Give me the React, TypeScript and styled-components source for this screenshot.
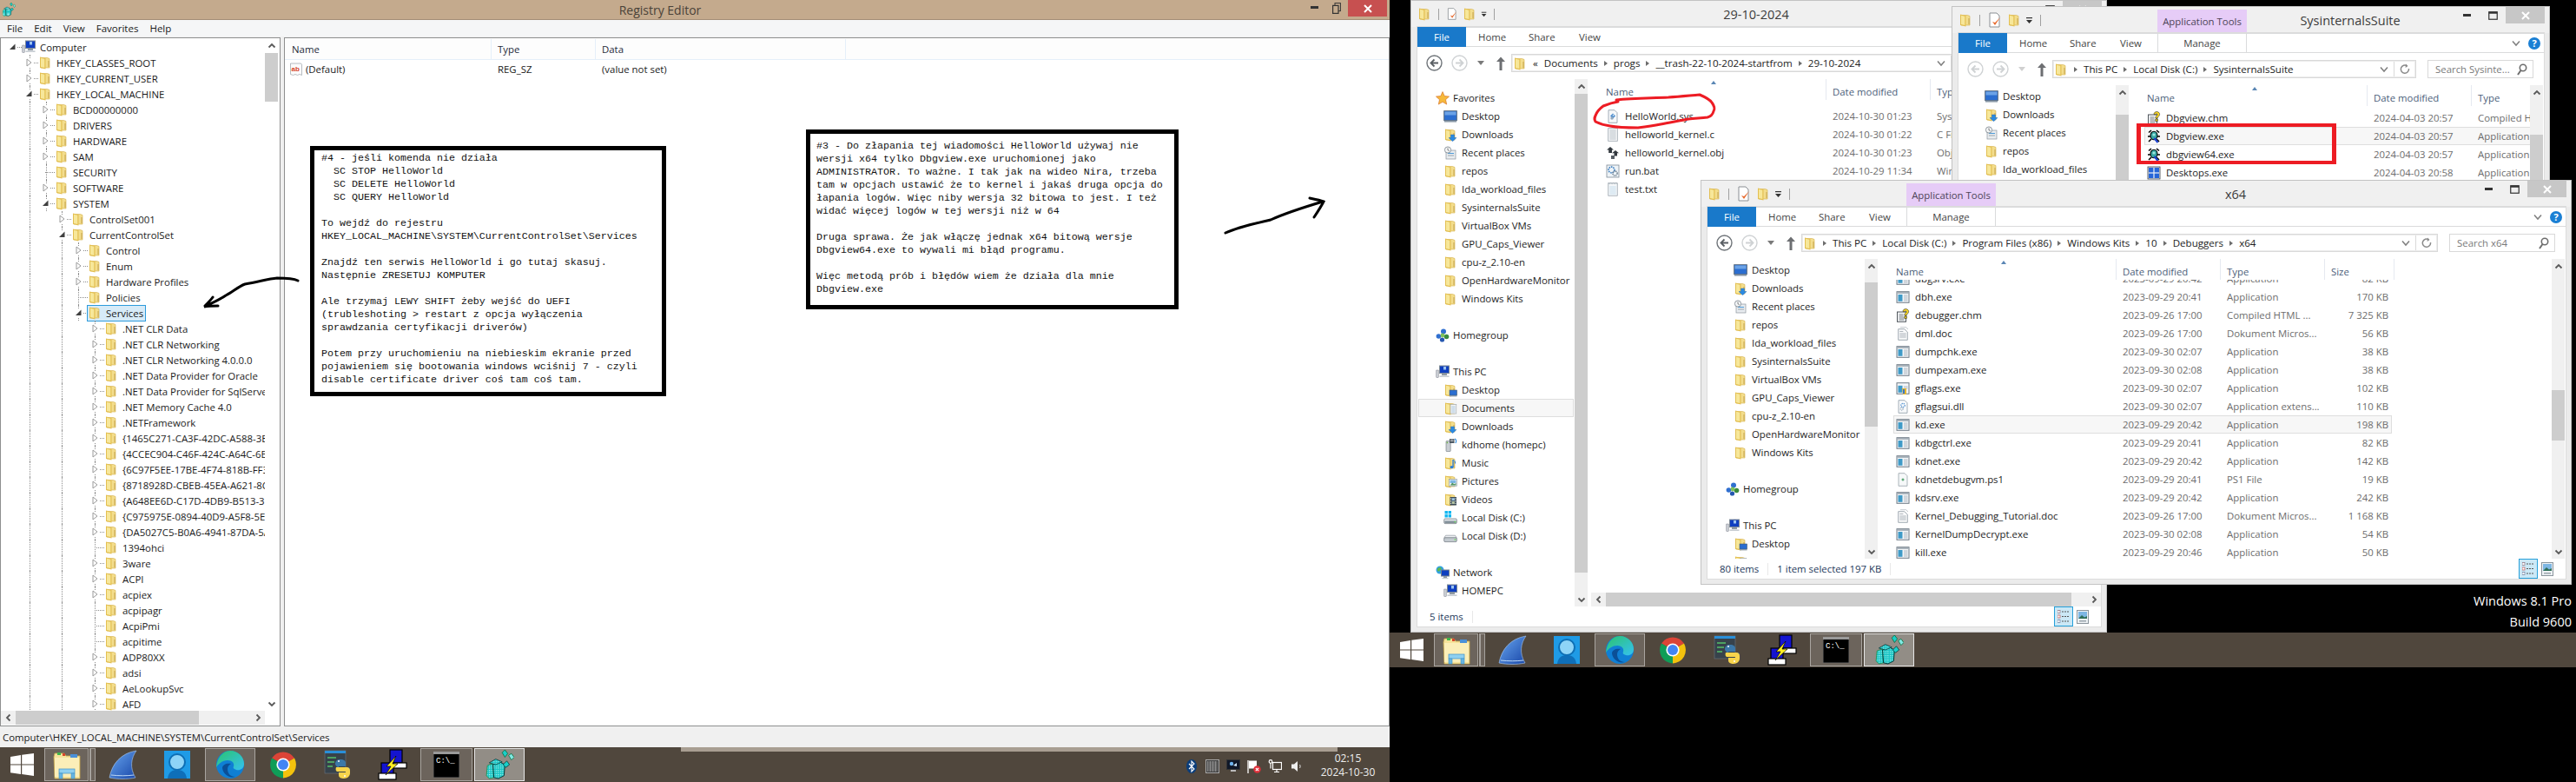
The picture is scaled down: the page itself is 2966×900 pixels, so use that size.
import React from "react";
import styled, { createGlobalStyle } from "styled-components";

const UI = `"Open Sans","Liberation Sans",sans-serif`;

const Global = createGlobalStyle`
  html, body { margin: 0; padding: 0; background: #000; }
  body { width: 2966px; height: 900px; overflow: hidden; font-family: ${UI}; font-size: 11px; }
  * { box-sizing: border-box; }
`;

/* ---------- icons ---------- */
type IconName = string;
const folderBase = (
  <>
    <path d="M3 2.5h7.5l2.5 1v10.5H3z" fill="#f3dd8c" stroke="#d4ae48" strokeWidth=".6" />
    <path d="M2 1.5l6.5 1.6v12.4L2 14z" fill="#e3bf52" />
    <path d="M3 2.8l4.3 1v10.1L3 13z" fill="#f7e79a" />
    <rect x="11.6" y="6" width=".8" height="7" fill="#b8973f" />
  </>
);
const paths: Record<IconName, React.ReactNode> = {
  folder: folderBase,
  desktop: (
    <>
      <rect x=".7" y="1.7" width="14.6" height="11" fill="#2b6ed0" stroke="#5a6a7a" />
      <rect x="1.5" y="2.5" width="13" height="4" fill="#6ba2e6" />
      <rect x="1" y="13" width="14" height="1.6" fill="#8c9aa8" />
    </>
  ),
  downloads: (
    <>
      {folderBase}
      <path d="M8.5 8h4v3.5H15l-4.5 4.2L6 11.5h2.5z" fill="#2b8ae2" stroke="#1a5fa8" strokeWidth=".4" />
    </>
  ),
  recent: (
    <>
      <rect x="3" y="5" width="11" height="10" fill="#e8ecef" stroke="#8d969e" strokeWidth=".7" />
      <rect x="5" y="8" width="7" height="1" fill="#4d9ad8" />
      <rect x="5" y="10.5" width="7" height="1" fill="#9aa4ac" />
      <circle cx="5" cy="4.5" r="3.6" fill="#f4f6f7" stroke="#79838c" strokeWidth=".8" />
      <path d="M5 2.5v2.2l1.6 1" fill="none" stroke="#444" strokeWidth=".7" />
    </>
  ),
  star: <path d="M8 .6l2.2 5 5.3.5-4 3.6 1.2 5.4L8 12.3l-4.7 2.8 1.2-5.4-4-3.6 5.3-.5z" fill="#f6b93b" stroke="#d9742a" strokeWidth=".7" />,
  homegroup: (
    <>
      <circle cx="9" cy="3.5" r="3" fill="#2f6fd0" />
      <circle cx="3.4" cy="9" r="2.8" fill="#2f6fd0" />
      <circle cx="12.5" cy="9.5" r="2.8" fill="#3c8b3e" />
      <circle cx="7.5" cy="13" r="2.6" fill="#2557b0" />
      <circle cx="8" cy="8" r="2.4" fill="#7fc25a" />
    </>
  ),
  pc: (
    <>
      <rect x=".8" y="6" width="2.4" height="8.5" fill="#c8cdd2" stroke="#667" strokeWidth=".4" />
      <rect x="4.5" y="1" width="11" height="8.6" fill="#0f3fc0" stroke="#7e8a96" />
      <rect x="9" y="2" width="3" height="3.5" fill="#9cc4f0" />
      <rect x="7" y="10" width="6" height="2" fill="#8f99a3" />
      <rect x="4.5" y="12.4" width="11" height="1.6" fill="#c5cbd1" />
    </>
  ),
  dfolder: (
    <>
      {folderBase}
      <rect x="7" y="8" width="8.5" height="6" fill="#2b6ed0" stroke="#4a5a6a" strokeWidth=".6" />
      <rect x="7" y="14" width="8.5" height="1.4" fill="#8c9aa8" />
    </>
  ),
  documents: (
    <>
      {folderBase}
      <rect x="8" y="3.5" width="6.8" height="10.5" fill="#f3f5f6" stroke="#98a2aa" strokeWidth=".6" />
      <path d="M9.3 6h4.2M9.3 8h4.2M9.3 10h4.2M9.3 12h4.2" stroke="#8db2d4" strokeWidth=".7" />
    </>
  ),
  music: (
    <>
      {folderBase}
      <path d="M11 4v8.5" stroke="#2b7ed8" strokeWidth="1.3" />
      <path d="M11 4c1.5 1 3 2 2.6 4.5" fill="none" stroke="#2b7ed8" strokeWidth="1" />
      <ellipse cx="9.5" cy="12.6" rx="2" ry="1.6" fill="#2b7ed8" />
    </>
  ),
  pictures: (
    <>
      {folderBase}
      <rect x="6.5" y="5.5" width="9" height="8" fill="#eef2f5" stroke="#8a949c" strokeWidth=".6" />
      <rect x="7.6" y="6.6" width="6.8" height="3.4" fill="#7db6e3" />
      <path d="M7.6 12.5l2.7-3 2 1.7 2.1-1.2v2.5z" fill="#4e9460" />
    </>
  ),
  videos: (
    <>
      {folderBase}
      <rect x="7.5" y="5" width="7.5" height="9.5" fill="#3b4a55" />
      <path d="M8.6 6v7.6M13.9 6v7.6" stroke="#e8eef2" strokeWidth="1" strokeDasharray="1 1" />
      <rect x="9.7" y="6.2" width="3.1" height="3" fill="#9ec5e2" />
      <rect x="9.7" y="10" width="3.1" height="3" fill="#b6c6a5" />
    </>
  ),
  netdrive: (
    <>
      <rect x="3" y="3.5" width="5.2" height="12" rx=".6" fill="#c9ced3" stroke="#6d767e" strokeWidth=".6" />
      <rect x="7" y="1" width="5.5" height="5" fill="#4c5863" />
      <path d="M8 2h3.5M8 3.5h3.5" stroke="#ddd" strokeWidth=".7" />
      <path d="M13 1c1.8 1 2.2 3 .8 5" fill="none" stroke="#2d8be0" strokeWidth="1.1" />
      <rect x="3.6" y="4.6" width="1.6" height="1.6" fill="#6fb24c" />
    </>
  ),
  diskc: (
    <>
      <rect x=".7" y="9" width="14.6" height="5.6" rx="1.2" fill="#dfe3e6" stroke="#6a737b" strokeWidth=".7" />
      <rect x="1.4" y="11.5" width="13.2" height="2.5" fill="#84919b" />
      <rect x="12.6" y="11.9" width="1.6" height="1.4" fill="#6ddc5a" />
      <rect x="1.5" y="0" width="3.4" height="3.4" fill="#11b6f0" />
      <rect x="5.6" y="0" width="3.4" height="3.4" fill="#11b6f0" />
      <rect x="1.5" y="4.1" width="3.4" height="3.4" fill="#11b6f0" />
      <rect x="5.6" y="4.1" width="3.4" height="3.4" fill="#11b6f0" />
    </>
  ),
  diskd: (
    <>
      <path d="M2.5 7.2h11l1.8 3H.7z" fill="#eef1f3" stroke="#7c858d" strokeWidth=".6" />
      <rect x=".7" y="9.8" width="14.6" height="4.8" rx="1.2" fill="#c3cad0" stroke="#6a737b" strokeWidth=".7" />
      <rect x="12.6" y="11.4" width="1.6" height="1.4" fill="#6ddc5a" />
    </>
  ),
  network: (
    <>
      <circle cx="5" cy="5" r="4.5" fill="#31a0e0" />
      <path d="M2 3.5c2-2 3-.8 4-1.8 1 1.5.4 3-1 3.6-.4 1.6-2 1.6-3 .6z" fill="#5fb94b" />
      <rect x="6.5" y="5" width="9" height="7" fill="#0f3fc0" stroke="#73808c" />
      <rect x="9" y="12" width="4" height="2.2" fill="#8f99a3" />
      <rect x="7.5" y="14" width="7" height="1.2" fill="#c5cbd1" />
    </>
  ),
  sys: (
    <>
      <path d="M3 .7h7l3 3v11.6H3z" fill="#f6f8fa" stroke="#8d9aa6" strokeWidth=".8" />
      <path d="M8 4.5l3 3-3 3-3-3z" fill="#4f8fcf" />
      <circle cx="7" cy="10" r="1.7" fill="#93a9bf" />
      <circle cx="8.5" cy="6.7" r=".8" fill="#fff" />
    </>
  ),
  cfile: (
    <>
      <rect x="2.7" y=".7" width="10.6" height="14.6" fill="#f8f9fa" stroke="#9aa4ad" strokeWidth=".8" />
      <path d="M4.3 3h7.4M4.3 5h7.4M4.3 7h7.4M4.3 9h7.4M4.3 11h7.4M4.3 13h7.4" stroke="#9fa9b2" strokeWidth=".7" />
    </>
  ),
  obj: (
    <>
      <path d="M5 1l4 3.4H7V8H3.2V4.4H1z" fill="#33393f" />
      <path d="M11 5l4 3.2h-2v3.4H9.5V8.2H7z" fill="#33393f" />
      <path d="M6 11h4v4H6z" fill="#555c63" />
    </>
  ),
  bat: (
    <>
      <rect x="1" y="1" width="14" height="14" fill="#eef3f7" stroke="#7f8c98" strokeWidth=".8" />
      <circle cx="6.5" cy="6.5" r="3.4" fill="none" stroke="#3e7fc0" strokeWidth="1.6" strokeDasharray="1.6 .9" />
      <circle cx="10.5" cy="10.5" r="2.6" fill="none" stroke="#6c7d8d" strokeWidth="1.4" strokeDasharray="1.3 .8" />
    </>
  ),
  txt: (
    <>
      <path d="M2.7.7h10.6v14.6H2.7z" fill="#f5f7f9" stroke="#9aa4ad" strokeWidth=".8" />
      <path d="M2.7.7l1.5 1 1.5-1 1.5 1 1.5-1 1.5 1 1.5-1 1.5 1" fill="none" stroke="#9aa4ad" strokeWidth=".6" />
      <path d="M4.3 5h7.4M4.3 7h7.4M4.3 9h7.4M4.3 11h7.4M4.3 13h7.4" stroke="#b5d2e8" strokeWidth=".7" />
    </>
  ),
  exe: (
    <>
      <rect x="1" y="1.7" width="14" height="12.6" fill="#f4f6f8" stroke="#6e7a85" />
      <rect x="1.5" y="2.2" width="13" height="1.6" fill="#99a5af" />
      <rect x="2.5" y="5" width="5" height="7.8" fill="#3f9ac7" />
      <path d="M9 6h4.5M9 8h4.5M9 10h4.5M9 12h4.5" stroke="#9da8b2" strokeWidth=".8" />
    </>
  ),
  gflags: (
    <>
      <rect x="1" y="1.7" width="14" height="12.6" fill="#f4f6f8" stroke="#6e7a85" />
      <rect x="2.5" y="4.8" width="5" height="8" fill="#3f9ac7" />
      <path d="M9 6h4.5M9 8h4.5" stroke="#9da8b2" strokeWidth=".8" />
      <path d="M7 8h5v7H8z" fill="#e4b72f" />
      <rect x="8" y="9" width="2" height="5" fill="#4077c2" />
    </>
  ),
  chm: (
    <>
      <rect x="1.5" y="4" width="10" height="11.3" fill="#f3f5f7" stroke="#40474d" strokeWidth=".9" />
      <path d="M3.5 7h5M3.5 9h5M3.5 11h6M3.5 13h6" stroke="#5b6269" strokeWidth=".8" />
      <path d="M8 3.5C8 1.4 9.8.6 11.2.6c1.9 0 3.4 1.2 3.4 3 0 2.2-2.4 2.6-2.4 4.4h-2.4c0-2.6 2.2-3 2.2-4.2 0-.6-.4-1-1-1-.7 0-1 .5-1 1.1zM9.8 9h2.6v2.4H9.8z" fill="#ffdc24" stroke="#222" strokeWidth=".6" />
    </>
  ),
  word: (
    <>
      <path d="M2.7 2.7h7l3.6 3.4v9.2H2.7z" fill="#f8f9fa" stroke="#8c969f" strokeWidth=".8" />
      <path d="M4.3 8h7.4M4.3 10h7.4M4.3 12h7.4M4.3 5.5h4" stroke="#9099a2" strokeWidth=".7" />
      <path d="M5 .7h6.6l2.4 2.3" fill="none" stroke="#aab2ba" strokeWidth=".7" />
    </>
  ),
  dll: (
    <>
      <path d="M3 .7h7l3 3v11.6H3z" fill="#f7f9fb" stroke="#8d9aa6" strokeWidth=".8" />
      <circle cx="8" cy="6.5" r="2.2" fill="none" stroke="#4f8fcf" strokeWidth="1.3" strokeDasharray="1.2 .8" />
      <circle cx="6.6" cy="10.6" r="1.6" fill="none" stroke="#7d92a6" strokeWidth="1" strokeDasharray="1 .7" />
    </>
  ),
  ps1: (
    <>
      <path d="M3 .7h7l3 3v11.6H3z" fill="#f6f8f9" stroke="#98a2aa" strokeWidth=".8" />
      <path d="M8 6.5v3M6.5 8h3" stroke="#2e8f4f" strokeWidth="1" />
    </>
  ),
  bug: (
    <>
      <path d="M5 1L2 3.5M11 1l3 2.5M1 8h3M15 8h-3M2 14l3-3M14 14l-3-3" stroke="#000" strokeWidth="1.5" />
      <ellipse cx="8" cy="7" rx="4" ry="4.8" fill="#36a6a2" stroke="#000" strokeWidth="1.1" />
      <circle cx="8" cy="6" r="1.6" fill="#9fe6e0" />
      <path d="M8.5 10l4 5" stroke="#1a3fd0" strokeWidth="2.2" />
    </>
  ),
  tiles: (
    <>
      <rect x="1" y="1" width="14" height="14" fill="#eef2f7" stroke="#333a42" strokeWidth=".8" />
      <rect x="2" y="2" width="5.4" height="5.4" fill="#2766d8" />
      <rect x="8.6" y="2" width="5.4" height="5.4" fill="#2766d8" />
      <rect x="2" y="8.6" width="5.4" height="5.4" fill="#2766d8" />
      <rect x="8.6" y="8.6" width="5.4" height="5.4" fill="#2766d8" />
    </>
  ),
  regval: (
    <>
      <path d="M1.5 1h12l1 1.2v12.3l-2.6-1-2.4 1-2.5-1-2.5 1-3-1z" fill="#fbfbfb" stroke="#9aa1a8" strokeWidth=".7" />
      <text x="2.6" y="9.5" fontSize="8" fontWeight="700" fill="#d8452a" fontFamily="Liberation Sans, sans-serif">ab</text>
    </>
  ),
};
const Glyph: React.FC<{ name: IconName; size?: number }> = ({ name, size = 16 }) => (
  <svg width={size} height={size} viewBox="0 0 16 16" style={{ flex: "none" }}>
    {paths[name]}
  </svg>
);

const RegeditIcon: React.FC<{ size: number }> = ({ size }) => (
  <svg width={size} height={size} viewBox="0 0 32 32" style={{ flex: "none" }}>
    <defs>
      <pattern id="regGrid" width="2.4" height="2.4" patternUnits="userSpaceOnUse">
        <rect width="2.4" height="2.4" fill="#18c4c4" />
        <rect width="1.1" height="1.1" fill="#b9f6f2" />
      </pattern>
    </defs>
    <path d="M2 28l1-11 6-2 1 15-5 1z" fill="url(#regGrid)" stroke="#083" strokeWidth=".6" />
    <path d="M10 30l-1-14 7-3 6 3-1 12-6 3z" fill="url(#regGrid)" stroke="#033" strokeWidth=".9" />
    <path d="M5 14l7-4 7 3-7 3z" fill="url(#regGrid)" stroke="#033" strokeWidth=".7" />
    <path d="M20 16l4-4 3 4-4 3z" fill="#19cfc9" stroke="#033" strokeWidth=".7" />
    <path d="M19 3l3-3 3 4-3 4z" fill="#19cfc9" stroke="#063" strokeWidth=".7" />
    <path d="M26 6l3-2 3 4-3 3z" fill="#7fe8e2" stroke="#063" strokeWidth=".7" />
  </svg>
);

const tbIcons: Record<string, React.ReactNode> = {
  explorer: (
    <svg width="34" height="34" viewBox="0 0 34 34">
      <path d="M2 8l1-4h11l2 3h16v26H3z" fill="#f6e39a" stroke="#c5a64f" strokeWidth=".8" />
      <rect x="3" y="9" width="28" height="22" fill="#fbeeb8" />
      <rect x="6" y="3" width="4" height="3" fill="#3fb54b" />
      <rect x="12" y="4" width="3" height="3" fill="#d8452a" />
      <rect x="21" y="5" width="8" height="4" fill="#4a90d8" />
      <rect x="8" y="22" width="18" height="5" fill="#8fd0f0" stroke="#3e90c8" strokeWidth=".7" />
      <path d="M8 27h4v6H8zM22 27h4v6h-4z" fill="#66b5e3" stroke="#3e90c8" strokeWidth=".6" />
    </svg>
  ),
  shark: (
    <svg width="34" height="34" viewBox="0 0 34 34">
      <defs>
        <linearGradient id="sharkG" x1="0" y1="0" x2="1" y2="1">
          <stop offset="0" stopColor="#6aa8f0" />
          <stop offset="1" stopColor="#1846a8" />
        </linearGradient>
      </defs>
      <path d="M1 32C4 16 14 4 32 1c-6 8-8 20-1 31-10 2-20 2-30 0z" fill="url(#sharkG)" stroke="#a9c9ee" strokeWidth=".6" />
      <path d="M3 29c9 1 18 1 26 0" fill="none" stroke="#bcd7f5" strokeWidth="1" />
    </svg>
  ),
  search: (
    <svg width="30" height="32" viewBox="0 0 30 32">
      <rect width="30" height="32" fill="#1f9be6" />
      <circle cx="15" cy="13" r="9" fill="#8ed4f7" stroke="#0e6fb5" strokeWidth="2" />
      <path d="M4 32c1-8 6-10 11-10s10 2 11 10z" fill="#0f6fb9" />
    </svg>
  ),
  edge: (
    <svg width="34" height="34" viewBox="0 0 34 34">
      <defs>
        <linearGradient id="edgeG" x1="0" y1="0" x2="1" y2="1">
          <stop offset="0" stopColor="#2bc46c" />
          <stop offset="1" stopColor="#35c1f1" />
        </linearGradient>
      </defs>
      <circle cx="17" cy="17" r="16" fill="#0f7fd4" />
      <path d="M17 1c9 0 16 7 16 15 0 6-5 8-9 7-3-1-4-2-3-4 1-3-1-7-7-7-5 0-10 3-13 8C2 10 8 1 17 1z" fill="url(#edgeG)" />
      <path d="M8 21c1 7 8 12 15 10-6 0-9-4-9-9 0-3 2-5 4-6-5-1-10 1-10 5z" fill="#0b4f96" />
    </svg>
  ),
  chrome: (
    <svg width="34" height="34" viewBox="0 0 34 34">
      <path d="M17 17L4 9.5A15.5 15.5 0 0 1 30 9.5z" fill="#db4437" />
      <path d="M17 17L30 9.5A15.5 15.5 0 0 1 17 32.5z" fill="#f4c20d" />
      <path d="M17 17L17 32.5A15.5 15.5 0 0 1 4 9.5z" fill="#0f9d58" />
      <circle cx="17" cy="17" r="7.6" fill="#fff" />
      <circle cx="17" cy="17" r="6" fill="#4285f4" />
    </svg>
  ),
  python: (
    <svg width="32" height="34" viewBox="0 0 32 34">
      <rect x="1" y="1" width="24" height="26" fill="#37424b" stroke="#6b7680" strokeWidth=".6" />
      <rect x="1" y="1" width="24" height="3" fill="#2a8fd8" />
      <path d="M4 9h10M4 14h8M4 19h6" stroke="#55c16a" strokeWidth="1.4" />
      <path d="M13 16c0-3 2-5 6-5s6 2 6 4v4h-8v1h10c2 0 3 1 3 4h-8c-3 0-6 0-6-3 0-2-3-2-3-5z" fill="#3c78a8" />
      <path d="M17 20h9c3 0 4 2 4 4v3c0 3-3 6-7 6-3 0-6-1-6-4v-3h8v-1h-9c-2 0-3-2-2-5z" fill="#f7d44c" />
      <circle cx="17" cy="13" r="1" fill="#fff" />
      <circle cx="24" cy="30" r="1" fill="#fff" />
    </svg>
  ),
  putty: (
    <svg width="34" height="36" viewBox="0 0 34 36">
      <rect x="14" y="1" width="14" height="15" fill="#1414d0" stroke="#000" strokeWidth="1.2" />
      <rect x="13" y="16" width="20" height="6" fill="#fff" stroke="#000" strokeWidth="1.2" />
      <rect x="4" y="16" width="14" height="14" fill="#1414d0" stroke="#000" strokeWidth="1.2" />
      <rect x="1" y="28" width="20" height="7" fill="#fff" stroke="#000" strokeWidth="1.2" />
      <path d="M21 8L10 20h5l-6 10 14-13h-6z" fill="#ffee22" stroke="#000" strokeWidth=".7" />
    </svg>
  ),
  cmd: (
    <svg width="30" height="30" viewBox="0 0 30 30">
      <rect width="30" height="30" fill="#000" stroke="#666" />
      <rect width="30" height="3" fill="#9a9a9a" />
      <text x="3" y="13" fontSize="9" fill="#fff" fontFamily="Liberation Mono, monospace">C:\_</text>
    </svg>
  ),
};

const Win8Logo = () => (
  <svg width="27" height="26" viewBox="0 0 27 26">
    <path d="M0 4l12-2v10.5H0zM13.2 1.8L27 0v12.5H13.2zM0 13.6h12V24L0 22.2zM13.2 13.6H27V26l-13.8-2z" fill="#fff" />
  </svg>
);

/* ---------- page ---------- */
const Page = styled.div`
  display: flex;
  width: 2966px;
  height: 900px;
  background: #000;
  overflow: hidden;
  color: #1a1a1a;
`;
const LeftMonitor = styled.div`
  position: relative;
  display: flex;
  flex-direction: column;
  width: 1600px;
  height: 900px;
`;
const RightMonitor = styled.div`
  display: flex;
  flex-direction: column;
  width: 1366px;
  height: 900px;
`;
const Desktop = styled.div`
  position: relative;
  height: 728px;
  flex: none;
  background: #000;
  overflow: hidden;
`;

/* ---------- registry editor ---------- */
const RegWindow = styled.div`
  flex: 1;
  display: flex;
  flex-direction: column;
  background: #f0f0f0;
  min-height: 0;
`;
const RegTitleBar = styled.div`
  height: 23px;
  flex: none;
  display: flex;
  align-items: center;
  background: #c4aa8d;
  border-bottom: 1px solid #a38d76;
  padding-left: 2px;
`;
const RegTitle = styled.div`
  flex: 1;
  text-align: center;
  font-size: 14px;
  color: #4a4239;
  padding-left: 2px;
  padding-top: 1px;
`;
const RegControls = styled.div`
  display: flex;
  align-self: flex-start;
  margin-right: 3px;
  height: 19px;
`;
const RegControl = styled.div`
  width: 26px;
  height: 18px;
  display: flex;
  align-items: center;
  justify-content: center;
`;
const RegClose = styled.div`
  width: 45px;
  height: 19px;
  background: #c75050;
  color: #fff;
  display: flex;
  align-items: center;
  justify-content: center;
`;
const MenuBar = styled.div`
  height: 19px;
  flex: none;
  background: #f5f6f7;
  display: flex;
  align-items: center;
  padding: 0 0 0 8px;
  gap: 13px;
  font-size: 11.5px;
`;
const MenuItem = styled.span`
  color: #1a1a1a;
`;
const Panes = styled.div`
  flex: 1;
  display: flex;
  gap: 4px;
  min-height: 0;
  padding-top: 1px;
`;
const TreePane = styled.div`
  width: 323px;
  flex: none;
  display: flex;
  flex-direction: column;
  background: #fff;
  border: 1px solid #8e8f8f;
  border-bottom: 1px solid #8e8f8f;
  min-height: 0;
`;
const TreeBody = styled.div`
  flex: 1;
  display: flex;
  min-height: 0;
`;
const TreeList = styled.div`
  flex: 1;
  min-width: 0;
  overflow: hidden;
  padding-top: 1px;
`;
const TreeRowBox = styled.div<{ $level: number }>`
  position: relative;
  display: flex;
  align-items: center;
  height: 18px;
  padding-left: ${(p) => 8 + p.$level * 19}px;
  white-space: nowrap;
  font-size: 11.4px;
`;
const TreeGuide = styled.span<{ $x: number }>`
  position: absolute;
  top: 0;
  bottom: 0;
  left: ${(p) => p.$x}px;
  border-left: 1px dotted #8d8d8d;
`;
const Expander = styled.span`
  position: relative;
  width: 11px;
  height: 11px;
  flex: none;
  background: #fff;
  display: flex;
  align-items: center;
  justify-content: center;
`;
const ExpanderTail = styled.span`
  width: 5px;
  flex: none;
  border-bottom: 1px dotted #8d8d8d;
`;
const LeafTail = styled.span`
  width: 11px;
  flex: none;
  margin-left: 5px;
  border-bottom: 1px dotted #8d8d8d;
`;
const TreeLabel = styled.span<{ $sel?: boolean }>`
  display: inline-flex;
  align-items: center;
  gap: 5px;
  height: 19px;
  padding: 0 3px 0 1px;
  margin-left: -1px;
  position: relative;
  background: ${(p) => (p.$sel ? "#d7ebf8" : "transparent")};
  outline: ${(p) => (p.$sel ? "1px solid #2d9bdc" : "none")};
  outline-offset: -1px;
`;
const VBar = styled.div<{ $track?: string }>`
  width: 15px;
  flex: none;
  display: flex;
  flex-direction: column;
  background: ${(p) => p.$track || "#f0f0f0"};
`;
const ArrowCell = styled.div`
  height: 17px;
  flex: none;
  display: flex;
  align-items: center;
  justify-content: center;
  color: #444;
`;
const VTrack = styled.div`
  flex: 1;
  min-height: 0;
`;
const VThumb = styled.div<{ $top: number; $h: number }>`
  margin-top: ${(p) => p.$top}px;
  height: ${(p) => p.$h}px;
  background: #cdcdcd;
`;
const HBar = styled.div`
  height: 16px;
  flex: none;
  display: flex;
  background: #f0f0f0;
`;
const HArrow = styled.div`
  width: 17px;
  flex: none;
  display: flex;
  align-items: center;
  justify-content: center;
`;
const HTrack = styled.div`
  flex: 1;
  min-width: 0;
`;
const HThumb = styled.div<{ $w: number }>`
  width: ${(p) => p.$w}px;
  height: 16px;
  background: #cdcdcd;
`;
const TreeHBarWrap = styled.div`
  padding-right: 17px;
  padding-bottom: 1px;
  background: #fff;
`;
const ScrollPad = styled.div`
  width: 2px;
  flex: none;
  background: #fff;
`;
const ValuesPane = styled.div`
  flex: 1;
  min-width: 0;
  background: #fff;
  border: 1px solid #8e8f8f;
`;
const ValuesHeader = styled.div`
  display: grid;
  grid-template-columns: 238px 120px 288px 1fr;
  height: 24px;
  border-bottom: 1px solid #e5effa;
  margin-top: 1px;
  background: #fdfdfd;
  font-size: 11.4px;
  color: #1e2a3a;
`;
const ValuesHead = styled.div`
  display: flex;
  align-items: center;
  padding-left: 7px;
  border-right: 1px solid #e5effa;
  &:first-child {
    padding-left: 8px;
  }
`;
const ValueRow = styled.div`
  display: grid;
  grid-template-columns: 238px 120px 1fr;
  height: 21px;
  align-items: center;
  font-size: 11.4px;
`;
const ValueName = styled.div`
  display: flex;
  align-items: center;
  gap: 3px;
  padding-left: 5px;
`;
const ValueCell = styled.div`
  padding-left: 7px;
`;
const RegStatus = styled.div`
  height: 24px;
  flex: none;
  display: flex;
  align-items: center;
  padding-left: 3px;
  font-size: 11.4px;
  background: #f0f0f0;
`;

/* ---------- annotations ---------- */
const NoteBox = styled.pre<{ $x: number; $y: number; $w: number; $h: number; $padTop: number; $padLeft: number }>`
  position: absolute;
  left: ${(p) => p.$x}px;
  top: ${(p) => p.$y}px;
  width: ${(p) => p.$w}px;
  height: ${(p) => p.$h}px;
  margin: 0;
  padding: ${(p) => p.$padTop}px 0 0 ${(p) => p.$padLeft}px;
  border: 5px solid #000;
  background: #fff;
  color: #111;
  font-family: "Liberation Mono", "DejaVu Sans Mono", monospace;
  font-size: 11.67px;
  line-height: 15px;
  white-space: pre;
`;
const Scribble = styled.svg<{ $z?: number }>`
  position: absolute;
  left: 0;
  top: 0;
  z-index: ${(p) => p.$z ?? "auto"};
  pointer-events: none;
`;
const RedFrame = styled.div`
  position: absolute;
  left: 860px;
  top: 142px;
  width: 230px;
  height: 47px;
  border: 5px solid #ed1c24;
  border-width: 4px 5px;
  z-index: 4;
`;

/* ---------- explorer ---------- */
const Frame = styled.div<{ $x: number; $y: number; $w: number; $h: number; $z: number }>`
  position: absolute;
  left: ${(p) => p.$x}px;
  top: ${(p) => p.$y}px;
  width: ${(p) => p.$w}px;
  height: ${(p) => p.$h}px;
  z-index: ${(p) => p.$z};
  display: flex;
  flex-direction: column;
  background: #ebebeb;
  border: 1px solid #c3c3c3;
  padding: 0 6px 6px 7px;
`;
const ExTitleBar = styled.div`
  height: 30px;
  flex: none;
  display: flex;
  align-items: flex-end;
  margin: 0 -6px 0 -7px;
  background: #f0f0f0;
`;
const Qat = styled.div<{ $w: number }>`
  width: ${(p) => p.$w}px;
  flex: none;
  display: flex;
  align-items: center;
  height: 30px;
  padding-left: 7px;
`;
const QatSep = styled.span`
  width: 1px;
  height: 13px;
  background: #a0a0a0;
  margin: 0 8px;
`;
const QatGap = styled.span`
  width: 5px;
  flex: none;
`;
const AppToolsTab = styled.div`
  width: 103px;
  height: 27px;
  flex: none;
  background: #e6ccf7;
  display: flex;
  align-items: center;
  justify-content: center;
  font-size: 11.4px;
  color: #4d4558;
`;
const ExTitle = styled.div`
  flex: 1;
  align-self: center;
  text-align: center;
  font-size: 14.5px;
  color: #3c3c3c;
  white-space: nowrap;
`;
const ExControls = styled.div`
  align-self: flex-start;
  display: flex;
  margin-right: 5px;
  height: 19px;
`;
const ExControl = styled.div`
  width: 30px;
  height: 19px;
  display: flex;
  align-items: center;
  justify-content: center;
`;
const ExClose = styled.div`
  width: 45px;
  height: 19px;
  background: #c7c7c7;
  display: flex;
  align-items: center;
  justify-content: center;
`;
const TabsRow = styled.div`
  height: 23px;
  flex: none;
  display: flex;
  align-items: stretch;
  background: #fff;
  border-top: 1px solid #dadbdc;
  border-bottom: 1px solid #dadbdc;
  font-size: 11.4px;
  color: #444;
  position: relative;
`;
const FileTab = styled.div`
  width: 56px;
  flex: none;
  margin: -1px 0;
  background: #1979ca;
  color: #fff;
  display: flex;
  align-items: center;
  justify-content: center;
`;
const RibbonTab = styled.div`
  width: 58px;
  flex: none;
  display: flex;
  align-items: center;
  padding-left: 14px;
`;
const ViewTab = styled(RibbonTab)`
  width: 57px;
`;
const ManageTab = styled.div`
  width: 103px;
  flex: none;
  display: flex;
  align-items: center;
  justify-content: center;
  border-left: 1px solid #dadbdc;
  border-right: 1px solid #dadbdc;
`;
const RibbonSpacer = styled.div`
  flex: 1;
`;
const RibbonEnd = styled.div`
  display: flex;
  align-items: center;
  gap: 9px;
  padding-right: 4px;
`;
const HelpDot = styled.div`
  width: 14px;
  height: 14px;
  border-radius: 50%;
  background: #1a7fd4;
  color: #fff;
  font-size: 11px;
  font-weight: 700;
  line-height: 14px;
  text-align: center;
`;
const Inner = styled.div`
  flex: 1;
  min-height: 0;
  display: flex;
  flex-direction: column;
  background: #fff;
  box-shadow: 0 0 0 1px #dcdcdc;
`;
const AddrRow = styled.div`
  height: 37px;
  flex: none;
  display: flex;
  align-items: flex-start;
  padding-top: 8px;
  padding-right: 12px;
`;
const NavButtons = styled.div`
  display: grid;
  grid-template-columns: 19px 19px 10px 16px;
  column-gap: 10px;
  align-items: center;
  height: 21px;
  padding-left: 10px;
  margin-right: 4px;
  flex: none;
`;
const AddrBox = styled.div`
  flex: 1;
  min-width: 0;
  height: 21px;
  display: flex;
  align-items: stretch;
  border: 1px solid #d9d9d9;
  outline: 1px solid #ececec;
  outline-offset: -2px;
  font-size: 11.6px;
`;
const Crumbs = styled.div`
  flex: 1;
  min-width: 0;
  display: flex;
  align-items: center;
  gap: 7px;
  padding-left: 1px;
  overflow: hidden;
  white-space: nowrap;
  color: #222;
`;
const CrumbArrow = styled.span`
  width: 0;
  height: 0;
  flex: none;
  border-left: 4px solid #6d6d6d;
  border-top: 3.5px solid transparent;
  border-bottom: 3.5px solid transparent;
`;
const AddrCell = styled.div<{ $line?: boolean }>`
  width: ${(p) => (p.$line ? 25 : 22)}px;
  flex: none;
  display: flex;
  align-items: center;
  justify-content: center;
  border-left: ${(p) => (p.$line ? "1px solid #d9d9d9" : "none")};
`;
const SearchBox = styled.div`
  width: 122px;
  height: 21px;
  flex: none;
  margin-left: 13px;
  display: flex;
  align-items: center;
  justify-content: space-between;
  padding: 0 6px 0 8px;
  border: 1px solid #d9d9d9;
  font-size: 11.4px;
  color: #7a7a7a;
  white-space: nowrap;
  overflow: hidden;
`;
const ExBody = styled.div`
  flex: 1;
  min-height: 0;
  display: flex;
`;
const NavSide = styled.div`
  width: 196px;
  flex: none;
  display: flex;
  margin-right: 4px;
`;
const NavList = styled.div<{ $pad: number }>`
  width: 181px;
  flex: none;
  overflow: hidden;
  padding-top: ${(p) => p.$pad}px;
`;
const NavRow = styled.div<{ $head?: boolean; $sel?: boolean }>`
  height: 21px;
  margin-left: 1px;
  width: 179px;
  display: flex;
  align-items: center;
  gap: ${(p) => (p.$head ? 4 : 5)}px;
  padding-left: ${(p) => (p.$head ? 19 : 28)}px;
  font-size: 11.4px;
  white-space: nowrap;
  color: #1d1d1d;
  background: ${(p) => (p.$sel ? "#f7f7f7" : "transparent")};
  border: 1px solid ${(p) => (p.$sel ? "#dedede" : "transparent")};
`;
const NavBlank = styled.div`
  height: 21px;
`;
const ListSide = styled.div`
  flex: 1;
  min-width: 0;
  display: flex;
`;
const ListMain = styled.div`
  flex: 1;
  min-width: 0;
  display: flex;
  flex-direction: column;
  position: relative;
`;
const ListHeader = styled.div`
  height: 24px;
  flex: none;
  padding-top: 4px;
  padding-left: 14px;
  display: grid;
  grid-template-columns: 257px 120px 120px 80px;
  font-size: 11.4px;
  color: #4c607a;
  white-space: nowrap;
  overflow: hidden;
  background: #fff;
`;
const ListHead = styled.div`
  padding-left: 7px;
  margin-top: -4px;
  padding-top: 4px;
  border-right: 1px solid #e5e9f0;
  display: flex;
  align-items: center;
  &:first-child {
    padding-left: 3px;
  }
`;
const SortMark = styled.span`
  position: absolute;
  left: 138px;
  top: 2px;
  width: 0;
  height: 0;
  border-left: 3.5px solid transparent;
  border-right: 3.5px solid transparent;
  border-bottom: 4px solid #5a86b4;
`;
const RowsClip = styled.div`
  flex: 1;
  min-height: 0;
  overflow: hidden;
`;
const RowsInner = styled.div<{ $off: number }>`
  margin-top: ${(p) => p.$off}px;
`;
const FileRow = styled.div<{ $sel?: boolean }>`
  width: 574px;
  height: 21px;
  margin-left: 14px;
  display: grid;
  grid-template-columns: 263px 120px 120px 66px;
  align-items: center;
  font-size: 11.4px;
  white-space: nowrap;
  border: 1px solid ${(p) => (p.$sel ? "#dedede" : "transparent")};
  background: ${(p) => (p.$sel ? "#f7f7f7" : "transparent")};
`;
const FileName = styled.div`
  display: flex;
  align-items: center;
  gap: 6px;
  padding-left: 2px;
  color: #1d1d1d;
  overflow: hidden;
`;
const FileMeta = styled.div<{ $right?: boolean }>`
  color: #6d6d6d;
  text-align: ${(p) => (p.$right ? "right" : "left")};
  overflow: hidden;
`;
const ExStatus = styled.div`
  height: 23px;
  flex: none;
  display: flex;
  align-items: stretch;
  font-size: 11.4px;
  color: #1e395b;
  padding-left: 14px;
`;
const StatusText = styled.div`
  display: flex;
  align-items: center;
  padding-right: 10px;
  margin-right: 10px;
  white-space: nowrap;
  &::after {
    content: "";
    width: 1px;
    height: 14px;
    background: #e8e8e8;
    margin-left: 10px;
    margin-right: -10px;
  }
`;
const ViewToggle = styled.div<{ $on?: boolean }>`
  width: 22px;
  flex: none;
  display: flex;
  align-items: center;
  justify-content: center;
  background: ${(p) => (p.$on ? "#cbe8f6" : "transparent")};
  border: 1px solid ${(p) => (p.$on ? "#26a0da" : "transparent")};
`;
const StatusSpacer = styled.div`
  flex: 1;
`;
const StatusEnd = styled.div`
  display: flex;
  align-items: stretch;
  padding-right: 10px;
`;
const ScrollEnd = styled.div`
  width: 1px;
  flex: none;
`;

const Watermark = styled.div`
  position: absolute;
  right: 5px;
  bottom: 0;
  text-align: right;
  color: #fff;
  font-size: 14.5px;
  line-height: 24px;
`;

/* ---------- taskbar ---------- */
const Taskbar = styled.div`
  position: relative;
  z-index: 6;
  height: 40px;
  flex: none;
  display: flex;
  align-items: stretch;
  gap: 2px;
  background: #50473d;
  padding: 1px 0;
`;
const StartCell = styled.div`
  width: 49px;
  flex: none;
  display: flex;
  align-items: center;
  justify-content: center;
  padding-left: 1px;
`;
const TaskSlot = styled.div<{ $w: number; $state?: "on" | "front" }>`
  width: ${(p) => p.$w}px;
  flex: none;
  display: flex;
  align-items: center;
  justify-content: center;
  background: ${(p) =>
    p.$state === "front" ? "rgba(255,255,255,.38)" : p.$state === "on" ? "rgba(255,255,255,.16)" : "transparent"};
  border: 1px solid
    ${(p) => (p.$state === "front" ? "#e6e6e6" : p.$state === "on" ? "rgba(255,255,255,.42)" : "transparent")};
`;
const TaskSliver = styled.div`
  width: 7px;
  flex: none;
  margin-left: -1px;
  border: 1px solid rgba(255, 255, 255, 0.4);
  border-left-width: 2px;
  background: rgba(255, 255, 255, 0.16);
`;
const TaskBand = styled.div`
  position: absolute;
  left: 784px;
  top: 0;
  width: 756px;
  height: 5px;
  background: #a89e92;
`;
const Tray = styled.div`
  margin-left: auto;
  display: flex;
  align-items: center;
`;
const TrayItem = styled.div`
  width: 24px;
  flex: none;
  display: flex;
  align-items: center;
  justify-content: center;
  padding-top: 3px;
`;
const Clock = styled.div`
  width: 96px;
  flex: none;
  text-align: center;
  color: #eee;
  font-size: 12px;
  line-height: 16px;
  padding-top: 1px;
`;

/* ---------- small drawings ---------- */
const Chevron: React.FC<{ d: "up" | "down" | "left" | "right" }> = ({ d }) => {
  const p = {
    up: "M1.5 6.5L5 3l3.5 3.5",
    down: "M1.5 3.5L5 7l3.5-3.5",
    left: "M6.5 1.5L3 5l3.5 3.5",
    right: "M3.5 1.5L7 5 3.5 8.5",
  }[d];
  return (
    <svg width="10" height="10" viewBox="0 0 10 10">
      <path d={p} fill="none" stroke="#5a5a5a" strokeWidth="1.8" />
    </svg>
  );
};
const NavCircle: React.FC<{ dir: "back" | "fwd"; on?: boolean }> = ({ dir, on }) => {
  const c = on ? "#6f7479" : "#cfd2d4";
  const a = on ? "#5a5f64" : "#cfd2d4";
  return (
    <svg width="19" height="19" viewBox="0 0 19 19">
      <circle cx="9.5" cy="9.5" r="8.5" fill="#fff" stroke={c} strokeWidth="1.4" />
      <path
        d={dir === "back" ? "M14 9.5H6M9.5 5.5l-4 4 4 4" : "M5 9.5h8M9.5 5.5l4 4-4 4"}
        fill="none"
        stroke={a}
        strokeWidth="1.8"
      />
    </svg>
  );
};
const DropTri: React.FC<{ on?: boolean }> = ({ on }) => (
  <svg width="10" height="6" viewBox="0 0 10 6">
    <path d="M1 0h8L5 5z" fill={on ? "#7a7a7a" : "#d0d0d0"} />
  </svg>
);
const UpArrow: React.FC = () => (
  <svg width="16" height="18" viewBox="0 0 16 18">
    <path d="M8 1.5L3 7h3.5v10h3V7H13z" fill="#6d6f72" />
  </svg>
);
const ChevDown = () => (
  <svg width="10" height="8" viewBox="0 0 10 8">
    <path d="M1 1.5l4 4.5 4-4.5" fill="none" stroke="#7f7f7f" strokeWidth="1.5" />
  </svg>
);
const Refresh = () => (
  <svg width="13" height="14" viewBox="0 0 13 14">
    <path d="M10.5 6a4.6 4.6 0 1 1-2-3.2" fill="none" stroke="#8a8a8a" strokeWidth="1.5" />
    <path d="M7 0.5l2.5 2.6L6.6 5z" fill="#8a8a8a" />
  </svg>
);
const Magnifier = () => (
  <svg width="13" height="14" viewBox="0 0 13 14">
    <circle cx="8" cy="5" r="3.7" fill="none" stroke="#6d6d6d" strokeWidth="1.6" />
    <path d="M5.5 8L2 13" stroke="#6d6d6d" strokeWidth="2" />
  </svg>
);
const MinGlyph: React.FC<{ c?: string }> = ({ c = "#333" }) => (
  <svg width="9" height="4" viewBox="0 0 9 4">
    <rect width="9" height="3" fill={c} />
  </svg>
);
const MaxGlyph = () => (
  <svg width="11" height="10" viewBox="0 0 11 10">
    <rect x=".75" y=".75" width="9.5" height="8.5" fill="none" stroke="#333" strokeWidth="1.2" />
    <rect x=".75" y=".75" width="9.5" height="2" fill="#333" />
  </svg>
);
const RestoreGlyph = () => (
  <svg width="10" height="13" viewBox="0 0 10 13">
    <rect x="3" y=".6" width="6.4" height="9" fill="none" stroke="#333" strokeWidth="1" />
    <rect x=".6" y="3.4" width="6.4" height="9" fill="#c4aa8d" stroke="#333" strokeWidth="1.2" />
  </svg>
);
const XGlyph = () => (
  <svg width="10" height="10" viewBox="0 0 10 10">
    <path d="M1 1l8 8M9 1l-8 8" stroke="#fff" strokeWidth="2" />
  </svg>
);
const QatDoc = () => (
  <svg width="18" height="18" viewBox="0 0 18 18">
    <path d="M3 1h8l3 3v13H3z" fill="#fff" stroke="#8a8f94" />
    <path d="M6 11l3 4 6-9-6 6z" fill="#e76a2e" />
  </svg>
);
const QatDrop = () => (
  <svg width="9" height="9" viewBox="0 0 9 9">
    <rect x="1" y="1" width="7" height="1.2" fill="#333" />
    <path d="M1 4h7L4.5 8z" fill="#333" />
  </svg>
);
const DetailsGlyph = () => (
  <svg width="14" height="15" viewBox="0 0 14 15">
    <path d="M5 2h9M5 7.5h9M5 13h9" stroke="#555" strokeWidth="1" strokeDasharray="2 1" />
    <rect x="0" y="0.5" width="3" height="3" fill="#fff" stroke="#8a6a7a" strokeWidth=".7" />
    <rect x="0" y="6" width="3" height="3" fill="#fff" stroke="#c05050" strokeWidth=".7" />
    <rect x="0" y="11.5" width="3" height="3" fill="#fff" stroke="#6a7a9a" strokeWidth=".7" />
  </svg>
);
const ThumbGlyph = () => (
  <svg width="14" height="16" viewBox="0 0 14 16">
    <rect x=".5" y=".5" width="13" height="15" fill="#eef2f5" stroke="#8a949c" />
    <rect x="2" y="2" width="10" height="8" fill="#7db6e3" />
    <path d="M2 10l4-4 3 2.5 3-1.5v3z" fill="#2f6f57" />
    <rect x="3" y="12" width="8" height="1.5" fill="#9aa4ac" />
  </svg>
);

/* ---------- data ---------- */
type TreeItem = { t: string; l: number; e?: "open" | "closed"; icon?: string; sel?: boolean };
const c = (t: string, l: number): TreeItem => ({ t, l, e: "closed" });
const o = (t: string, l: number): TreeItem => ({ t, l, e: "open" });
const n = (t: string, l: number): TreeItem => ({ t, l });
const tree: TreeItem[] = [
  { t: "Computer", l: 0, e: "open", icon: "pc" },
  c("HKEY_CLASSES_ROOT", 1),
  c("HKEY_CURRENT_USER", 1),
  o("HKEY_LOCAL_MACHINE", 1),
  c("BCD00000000", 2),
  c("DRIVERS", 2),
  c("HARDWARE", 2),
  c("SAM", 2),
  n("SECURITY", 2),
  c("SOFTWARE", 2),
  o("SYSTEM", 2),
  c("ControlSet001", 3),
  o("CurrentControlSet", 3),
  c("Control", 4),
  c("Enum", 4),
  c("Hardware Profiles", 4),
  n("Policies", 4),
  { t: "Services", l: 4, e: "open", sel: true },
  c(".NET CLR Data", 5),
  c(".NET CLR Networking", 5),
  c(".NET CLR Networking 4.0.0.0", 5),
  c(".NET Data Provider for Oracle", 5),
  c(".NET Data Provider for SqlServer", 5),
  c(".NET Memory Cache 4.0", 5),
  c(".NETFramework", 5),
  c("{1465C271-CA3F-42DC-A588-3E", 5),
  c("{4CCEC904-C46F-424C-A64C-6B", 5),
  c("{6C97F5EE-17BE-4F74-818B-FF3F", 5),
  c("{8718928D-CBEB-45EA-A621-8C", 5),
  c("{A648EE6D-C17D-4DB9-B513-3E", 5),
  c("{C975975E-0894-40D9-A5F8-5EB", 5),
  c("{DA5027C5-B0A6-4941-87DA-5A", 5),
  n("1394ohci", 5),
  c("3ware", 5),
  c("ACPI", 5),
  c("acpiex", 5),
  n("acpipagr", 5),
  n("AcpiPmi", 5),
  n("acpitime", 5),
  c("ADP80XX", 5),
  c("adsi", 5),
  c("AeLookupSvc", 5),
  c("AFD", 5),
];
const guidesFor = (i: number): number[] => {
  const g: number[] = [];
  if (i >= 1) g.push(33);
  if (i >= 4 && i <= 10) g.push(52);
  if (i >= 11) g.push(70);
  if (i >= 13 && i <= 17) g.push(89);
  if (i >= 18) g.push(108);
  return g;
};

const note4 = `#4 - jeśli komenda nie działa
  SC STOP HelloWorld
  SC DELETE HelloWorld
  SC QUERY HelloWorld

To wejdź do rejestru
HKEY_LOCAL_MACHINE\\SYSTEM\\CurrentControlSet\\Services

Znajdź ten serwis HelloWorld i go tutaj skasuj.
Następnie ZRESETUJ KOMPUTER

Ale trzymaj LEWY SHIFT żeby wejść do UEFI
(trubleshoting > restart z opcja wyłączenia
sprawdzania certyfikacji driverów)

Potem przy uruchomieniu na niebieskim ekranie przed
pojawieniem się bootowania windows wciśnij 7 - czyli
disable certificate driver coś tam coś tam.`;

const note3 = `#3 - Do złapania tej wiadomości HelloWorld używaj nie
wersji x64 tylko Dbgview.exe uruchomionej jako
ADMINISTRATOR. To ważne. I tak jak na wideo Nira, trzeba
tam w opcjach ustawić że to kernel i jakaś druga opcja do
łapania logów. Więc niby wersja 32 bitowa to jest. I też
widać więcej logów w tej wersji niż w 64

Druga sprawa. Że jak włączę jednak x64 bitową wersje
Dbgview64.exe to wywali mi błąd programu.

Więc metodą prób i błędów wiem że działa dla mnie
Dbgview.exe`;

type NavEntry = { t?: string; i?: string; h?: boolean; s?: boolean };
const favs: NavEntry[] = [
  { t: "Desktop", i: "desktop" },
  { t: "Downloads", i: "downloads" },
  { t: "Recent places", i: "recent" },
  { t: "repos", i: "folder" },
  { t: "Ida_workload_files", i: "folder" },
  { t: "SysinternalsSuite", i: "folder" },
  { t: "VirtualBox VMs", i: "folder" },
  { t: "GPU_Caps_Viewer", i: "folder" },
  { t: "cpu-z_2.10-en", i: "folder" },
  { t: "OpenHardwareMonitor", i: "folder" },
  { t: "Windows Kits", i: "folder" },
];
const nav1: NavEntry[] = [
  { t: "Favorites", i: "star", h: true },
  ...favs,
  {},
  { t: "Homegroup", i: "homegroup", h: true },
  {},
  { t: "This PC", i: "pc", h: true },
  { t: "Desktop", i: "dfolder" },
  { t: "Documents", i: "documents", s: true },
  { t: "Downloads", i: "downloads" },
  { t: "kdhome (homepc)", i: "netdrive" },
  { t: "Music", i: "music" },
  { t: "Pictures", i: "pictures" },
  { t: "Videos", i: "videos" },
  { t: "Local Disk (C:)", i: "diskc" },
  { t: "Local Disk (D:)", i: "diskd" },
  {},
  { t: "Network", i: "network", h: true },
  { t: "HOMEPC", i: "pc" },
];
const nav2: NavEntry[] = [
  ...favs,
  {},
  { t: "Homegroup", i: "homegroup", h: true },
  {},
  { t: "This PC", i: "pc", h: true },
  { t: "Desktop", i: "dfolder" },
  { t: "Documents", i: "documents" },
];

type FileEntry = { n: string; i: string; d?: string; t?: string; s?: string; sel?: boolean };
const files1: FileEntry[] = [
  { n: "HelloWorld.sys", i: "sys", d: "2024-10-30 01:23", t: "System file" },
  { n: "helloworld_kernel.c", i: "cfile", d: "2024-10-30 01:22", t: "C File" },
  { n: "helloworld_kernel.obj", i: "obj", d: "2024-10-30 01:23", t: "Object File" },
  { n: "run.bat", i: "bat", d: "2024-10-29 11:34", t: "Windows Batch File" },
  { n: "test.txt", i: "txt" },
];
const filesSys: FileEntry[] = [
  { n: "Dbgview.chm", i: "chm", d: "2024-04-03 20:57", t: "Compiled HTML ..." },
  { n: "Dbgview.exe", i: "bug", d: "2024-04-03 20:57", t: "Application", sel: true },
  { n: "dbgview64.exe", i: "bug", d: "2024-04-03 20:57", t: "Application" },
  { n: "Desktops.exe", i: "tiles", d: "2024-04-03 20:58", t: "Application" },
];
const filesX64: FileEntry[] = [
  { n: "dbgsrv.exe", i: "exe", d: "2023-09-29 20:42", t: "Application", s: "82 KB" },
  { n: "dbh.exe", i: "exe", d: "2023-09-29 20:41", t: "Application", s: "170 KB" },
  { n: "debugger.chm", i: "chm", d: "2023-09-26 17:00", t: "Compiled HTML ...", s: "7 325 KB" },
  { n: "dml.doc", i: "word", d: "2023-09-26 17:00", t: "Dokument Micros...", s: "56 KB" },
  { n: "dumpchk.exe", i: "exe", d: "2023-09-30 02:07", t: "Application", s: "38 KB" },
  { n: "dumpexam.exe", i: "exe", d: "2023-09-30 02:08", t: "Application", s: "38 KB" },
  { n: "gflags.exe", i: "gflags", d: "2023-09-30 02:07", t: "Application", s: "102 KB" },
  { n: "gflagsui.dll", i: "dll", d: "2023-09-30 02:07", t: "Application extens...", s: "110 KB" },
  { n: "kd.exe", i: "exe", d: "2023-09-29 20:42", t: "Application", s: "198 KB", sel: true },
  { n: "kdbgctrl.exe", i: "exe", d: "2023-09-29 20:41", t: "Application", s: "82 KB" },
  { n: "kdnet.exe", i: "exe", d: "2023-09-29 20:42", t: "Application", s: "142 KB" },
  { n: "kdnetdebugvm.ps1", i: "ps1", d: "2023-09-29 20:41", t: "PS1 File", s: "19 KB" },
  { n: "kdsrv.exe", i: "exe", d: "2023-09-29 20:42", t: "Application", s: "242 KB" },
  { n: "Kernel_Debugging_Tutorial.doc", i: "word", d: "2023-09-26 17:00", t: "Dokument Micros...", s: "1 168 KB" },
  { n: "KernelDumpDecrypt.exe", i: "exe", d: "2023-09-30 02:08", t: "Application", s: "54 KB" },
  { n: "kill.exe", i: "exe", d: "2023-09-29 20:46", t: "Application", s: "50 KB" },
];

/* ---------- composed ---------- */
const VScroll: React.FC<{ top: number; h: number; track?: string }> = ({ top, h, track }) => (
  <VBar $track={track}>
    <ArrowCell>
      <Chevron d="up" />
    </ArrowCell>
    <VTrack>
      <VThumb $top={top} $h={h} />
    </VTrack>
    <ArrowCell>
      <Chevron d="down" />
    </ArrowCell>
  </VBar>
);
const HScroll: React.FC<{ w: number }> = ({ w }) => (
  <HBar>
    <HArrow>
      <Chevron d="left" />
    </HArrow>
    <HTrack>
      <HThumb $w={w} />
    </HTrack>
    <HArrow>
      <Chevron d="right" />
    </HArrow>
  </HBar>
);

type ExplorerProps = {
  x: number;
  y: number;
  w: number;
  h: number;
  z: number;
  title: string;
  appTools?: boolean;
  back?: boolean;
  dropOn?: boolean;
  crumbs: string[];
  elided?: boolean;
  search: string;
  nav: NavEntry[];
  navPad: number;
  navThumb: [number, number];
  files: FileEntry[];
  filesOffset: number;
  listScroll?: [number, number];
  showSize?: boolean;
  hThumb?: number;
  status: string[];
};

const Explorer: React.FC<ExplorerProps> = (p) => (
  <Frame $x={p.x} $y={p.y} $w={p.w} $h={p.h} $z={p.z}>
    <ExTitleBar>
      <Qat $w={p.appTools ? 236 : 104}>
        <Glyph name="folder" size={16} />
        <QatSep />
        <QatDoc />
        <QatGap />
        <Glyph name="folder" size={16} />
        <QatGap />
        <QatDrop />
        <QatSep />
      </Qat>
      {p.appTools && <AppToolsTab>Application Tools</AppToolsTab>}
      <ExTitle>{p.title}</ExTitle>
      <ExControls>
        <ExControl>
          <MinGlyph />
        </ExControl>
        <ExControl>
          <MaxGlyph />
        </ExControl>
        <ExClose>
          <XGlyph />
        </ExClose>
      </ExControls>
    </ExTitleBar>
    <Inner>
      <TabsRow>
        <FileTab>File</FileTab>
        <RibbonTab>Home</RibbonTab>
        <RibbonTab>Share</RibbonTab>
        <ViewTab>View</ViewTab>
        {p.appTools && <ManageTab>Manage</ManageTab>}
        <RibbonSpacer />
        <RibbonEnd>
          <ChevDown />
          <HelpDot>?</HelpDot>
        </RibbonEnd>
      </TabsRow>
      <AddrRow>
        <NavButtons>
          <NavCircle dir="back" on={p.back} />
          <NavCircle dir="fwd" />
          <DropTri on={p.dropOn} />
          <UpArrow />
        </NavButtons>
        <AddrBox>
          <Crumbs>
            <Glyph name="folder" size={16} />
            {p.elided ? <span>«</span> : <CrumbArrow />}
            {p.crumbs.map((cr, i) => (
              <React.Fragment key={cr}>
                {i > 0 && <CrumbArrow />}
                <span>{cr}</span>
              </React.Fragment>
            ))}
          </Crumbs>
          <AddrCell>
            <ChevDown />
          </AddrCell>
          <AddrCell $line>
            <Refresh />
          </AddrCell>
        </AddrBox>
        <SearchBox>
          <span>{p.search}</span>
          <Magnifier />
        </SearchBox>
      </AddrRow>
      <ExBody>
        <NavSide>
          <NavList $pad={p.navPad}>
            {p.nav.map((e, i) =>
              e.t ? (
                <NavRow key={i} $head={e.h} $sel={e.s}>
                  <Glyph name={e.i!} />
                  <span>{e.t}</span>
                </NavRow>
              ) : (
                <NavBlank key={i} />
              )
            )}
          </NavList>
          <VScroll top={p.navThumb[0]} h={p.navThumb[1]} />
        </NavSide>
        <ListSide>
          <ListMain>
            <ListHeader>
              <ListHead>Name</ListHead>
              <ListHead>Date modified</ListHead>
              <ListHead>Type</ListHead>
              {p.showSize && <ListHead>Size</ListHead>}
            </ListHeader>
            <SortMark />
            <RowsClip>
              <RowsInner $off={p.filesOffset}>
                {p.files.map((f) => (
                  <FileRow key={f.n} $sel={f.sel}>
                    <FileName>
                      <Glyph name={f.i} />
                      <span>{f.n}</span>
                    </FileName>
                    <FileMeta>{f.d}</FileMeta>
                    <FileMeta>{f.t}</FileMeta>
                    <FileMeta $right>{f.s}</FileMeta>
                  </FileRow>
                ))}
              </RowsInner>
            </RowsClip>
            {p.hThumb && <HScroll w={p.hThumb} />}
          </ListMain>
          {p.listScroll && <VScroll top={p.listScroll[0]} h={p.listScroll[1]} />}
          {p.listScroll && <ScrollEnd />}
        </ListSide>
      </ExBody>
      <ExStatus>
        {p.status.map((s) => (
          <StatusText key={s}>{s}</StatusText>
        ))}
        <StatusSpacer />
        <StatusEnd>
          <ViewToggle $on>
            <DetailsGlyph />
          </ViewToggle>
          <ViewToggle>
            <ThumbGlyph />
          </ViewToggle>
        </StatusEnd>
      </ExStatus>
    </Inner>
  </Frame>
);

const TaskbarIcons = () => (
  <>
    <StartCell>
      <Win8Logo />
    </StartCell>
    <TaskSlot $w={51} $state="on">
      {tbIcons.explorer}
    </TaskSlot>
    <TaskSliver />
    <TaskSlot $w={60}>{tbIcons.shark}</TaskSlot>
    <TaskSlot $w={60}>{tbIcons.search}</TaskSlot>
    <TaskSlot $w={58} $state="on">
      {tbIcons.edge}
    </TaskSlot>
    <TaskSlot $w={60}>{tbIcons.chrome}</TaskSlot>
    <TaskSlot $w={62}>{tbIcons.python}</TaskSlot>
    <TaskSlot $w={60}>{tbIcons.putty}</TaskSlot>
    <TaskSlot $w={60} $state="on">
      {tbIcons.cmd}
    </TaskSlot>
    <TaskSlot $w={58} $state="front">
      <RegeditIcon size={34} />
    </TaskSlot>
  </>
);

export default function App() {
  return (
    <>
      <Global />
      <Page>
        <LeftMonitor>
          <RegWindow>
            <RegTitleBar>
              <RegeditIcon size={16} />
              <RegTitle>Registry Editor</RegTitle>
              <RegControls>
                <RegControl>
                  <MinGlyph />
                </RegControl>
                <RegControl>
                  <RestoreGlyph />
                </RegControl>
                <RegClose>
                  <XGlyph />
                </RegClose>
              </RegControls>
            </RegTitleBar>
            <MenuBar>
              {["File", "Edit", "View", "Favorites", "Help"].map((m) => (
                <MenuItem key={m}>{m}</MenuItem>
              ))}
            </MenuBar>
            <Panes>
              <TreePane>
                <TreeBody>
                  <TreeList>
                    {tree.map((it, i) => (
                      <TreeRowBox key={it.t} $level={it.l}>
                        {guidesFor(i).map((x) => (
                          <TreeGuide key={x} $x={x} />
                        ))}
                        {it.e ? (
                          <>
                            <Expander>
                              <svg width="9" height="10" viewBox="0 0 9 10">
                                {it.e === "open" ? (
                                  <path d="M7.5 1.5v6.5H1z" fill="#404040" />
                                ) : (
                                  <path d="M2 1l5 4-5 4z" fill="#fff" stroke="#9a9a9a" />
                                )}
                              </svg>
                            </Expander>
                            <ExpanderTail />
                          </>
                        ) : (
                          <LeafTail />
                        )}
                        <TreeLabel $sel={it.sel}>
                          <Glyph name={it.icon || "folder"} />
                          <span>{it.t}</span>
                        </TreeLabel>
                      </TreeRowBox>
                    ))}
                  </TreeList>
                  <VScroll top={0} h={56} track="#fff" />
                  <ScrollPad />
                </TreeBody>
                <TreeHBarWrap>
                  <HScroll w={211} />
                </TreeHBarWrap>
              </TreePane>
              <ValuesPane>
                <ValuesHeader>
                  <ValuesHead>Name</ValuesHead>
                  <ValuesHead>Type</ValuesHead>
                  <ValuesHead>Data</ValuesHead>
                  <div />
                </ValuesHeader>
                <ValueRow>
                  <ValueName>
                    <Glyph name="regval" />
                    <span>(Default)</span>
                  </ValueName>
                  <ValueCell>REG_SZ</ValueCell>
                  <ValueCell>(value not set)</ValueCell>
                </ValueRow>
              </ValuesPane>
            </Panes>
            <RegStatus>Computer\HKEY_LOCAL_MACHINE\SYSTEM\CurrentControlSet\Services</RegStatus>
          </RegWindow>
          <Scribble width={1600} height={500}>
            <path
              d="M343 323c-6-3-14-3-24-3-10 1-20 4-37 7-8 3-14 9-22 13-6 4-14 8-25 13 6-1 11-1 16-1M245 342c-2 3-5 6-9 10"
              fill="none"
              stroke="#000"
              strokeWidth="3"
              strokeLinecap="round"
            />
            <path
              d="M1411 268c15-7 35-11 52-15 20-9 40-15 60-21M1508 228c5 1 11 2 16 4-3 6-7 12-11 18"
              fill="none"
              stroke="#000"
              strokeWidth="3"
              strokeLinecap="round"
            />
          </Scribble>
          <NoteBox $x={357} $y={168} $w={410} $h={288} $padTop={1.5} $padLeft={8}>
            {note4}
          </NoteBox>
          <NoteBox $x={928} $y={149} $w={429} $h={207} $padTop={6.5} $padLeft={7}>
            {note3}
          </NoteBox>
          <Taskbar>
            <TaskbarIcons />
            <Tray>
              <TrayItem>
                <svg width="12" height="16" viewBox="0 0 12 16">
                  <ellipse cx="6" cy="8" rx="6" ry="8" fill="#0a3d7a" />
                  <path d="M3 5l6 6-3 3V2l3 3-6 6" fill="none" stroke="#fff" strokeWidth="1.1" />
                </svg>
              </TrayItem>
              <TrayItem>
                <svg width="16" height="16" viewBox="0 0 16 16">
                  <rect x=".5" y=".5" width="15" height="15" fill="#3a3a3a" stroke="#aaa" />
                  <path d="M2 3h12M2 5h12M2 7h12M2 9h12M2 11h12M2 13h12" stroke="#ddd" strokeWidth="1" strokeDasharray="1 .5" />
                </svg>
              </TrayItem>
              <TrayItem>
                <svg width="16" height="15" viewBox="0 0 16 15">
                  <rect x=".5" y=".5" width="15" height="11" fill="#101828" stroke="#333" />
                  <circle cx="6" cy="5" r="2.2" fill="#6fb4ee" />
                  <path d="M8 7l4-3v4z" fill="#cde6fb" />
                  <rect x="5" y="12" width="6" height="2" fill="#bbb" />
                </svg>
              </TrayItem>
              <TrayItem>
                <svg width="16" height="16" viewBox="0 0 16 16">
                  <path d="M1 1v15" stroke="#fff" strokeWidth="1.3" />
                  <path d="M2 1.5h9v9H2z" fill="#fff" />
                  <circle cx="11.5" cy="11.5" r="4.2" fill="#e0303a" />
                  <path d="M9.8 9.8l3.4 3.4M13.2 9.8l-3.4 3.4" stroke="#fff" strokeWidth="1.2" />
                </svg>
              </TrayItem>
              <TrayItem>
                <svg width="16" height="16" viewBox="0 0 16 16" fill="none" stroke="#fff" strokeWidth="1.2">
                  <rect x="5.5" y="3.5" width="10" height="8" />
                  <path d="M10 11.5v3M7 14.5h6" />
                  <circle cx="3" cy="2.5" r="1.8" />
                  <path d="M3 4.5v6" />
                </svg>
              </TrayItem>
              <TrayItem>
                <svg width="13" height="14" viewBox="0 0 13 14">
                  <path d="M1 4.5h3L8 1v12L4 9.5H1z" fill="#eee" />
                  <path d="M10.5 5c.8 1 .8 3 0 4" fill="none" stroke="#ddd" strokeWidth="1" />
                </svg>
              </TrayItem>
              <Clock>
                <div>02:15</div>
                <div>2024-10-30</div>
              </Clock>
            </Tray>
            <TaskBand />
          </Taskbar>
        </LeftMonitor>

        <RightMonitor>
          <Desktop>
            <Watermark>
              <div>Windows 8.1 Pro</div>
              <div>Build 9600</div>
            </Watermark>
            <Explorer
              x={24}
              y={0}
              w={802}
              h={728}
              z={1}
              title="29-10-2024"
              back
              dropOn
              elided
              crumbs={["Documents", "progs", "__trash-22-10-2024-startfrom", "29-10-2024"]}
              search=""
              nav={nav1}
              navPad={11}
              navThumb={[0, 551]}
              files={files1}
              filesOffset={8}
              hThumb={536}
              status={["5 items"]}
            />
            <Explorer
              x={647}
              y={7}
              w={689}
              h={400}
              z={2}
              title="SysinternalsSuite"
              appTools
              crumbs={["This PC", "Local Disk (C:)", "SysinternalsSuite"]}
              search="Search Sysinte..."
              nav={favs.slice(0, 5)}
              navPad={2}
              navThumb={[17, 240]}
              files={filesSys}
              filesOffset={3}
              listScroll={[40, 100]}
              status={[]}
            />
            <Explorer
              x={358}
              y={207}
              w={1003}
              h={466}
              z={3}
              title="x64"
              appTools
              back
              dropOn
              crumbs={["This PC", "Local Disk (C:)", "Program Files (x86)", "Windows Kits", "10", "Debuggers", "x64"]}
              search="Search x64"
              nav={nav2}
              navPad={2}
              navThumb={[10, 166]}
              files={filesX64}
              filesOffset={-12}
              listScroll={[134, 58]}
              showSize
              status={["80 items", "1 item selected  197 KB"]}
            />
            <RedFrame />
            <Scribble $z={4} width={1366} height={300}>
              <path
                d="M261 115C280 113 300 113 321 112C335 111 345 110 357 109C364 112 369 115 371 118C374 122 375 125 373 128C372 132 370 134 366 135C358 136 352 136 344 137C334 139 322 141 312 143C303 145 295 146 286 147C275 147 264 147 254 145C247 144 241 142 237 140C235 137 236 135 237.5 132C239 128 242 125 246 122C251 120 257 118 263 117"
                fill="none"
                stroke="#ed1c24"
                strokeWidth="3"
                strokeLinecap="round"
              />
            </Scribble>
          </Desktop>
          <Taskbar>
            <TaskbarIcons />
          </Taskbar>
        </RightMonitor>
      </Page>
    </>
  );
}
